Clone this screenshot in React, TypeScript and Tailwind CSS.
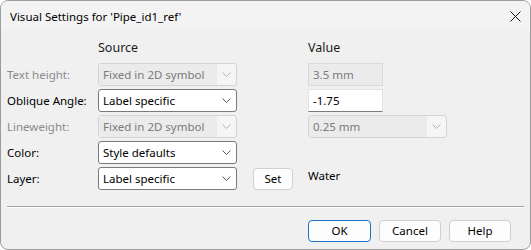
import React from 'react';

const font = { fontFamily: '"Noto Sans", "Liberation Sans", Arial, sans-serif' };

const Chevron = ({ disabled }: { disabled?: boolean }) => (
  <svg width="9" height="5" viewBox="0 0 9 5" className="shrink-0">
    <path d="M0.5 0.5 L4.5 4.5 L8.5 0.5" fill="none" stroke={disabled ? '#b4b4b4' : '#5c5c5c'} strokeWidth="1" />
  </svg>
);

const Combo = ({ value, disabled, width = 'w-[139px]' }: { value: string; disabled?: boolean; width?: string }) =>
  disabled ? (
    <div className={`${width} h-[23px] flex border border-[#d3d3d3] rounded-[3px] bg-[#f5f5f5]`}>
      <div className="flex-1 flex items-center pl-[4px] bg-[#ebebeb] text-[#7a7a7a] text-[11.5px]">{value}</div>
      <div className="w-[19px] flex items-center justify-center pr-[1px]">
        <Chevron disabled />
      </div>
    </div>
  ) : (
    <div className={`${width} h-[23px] flex items-center border border-[#7a7a7a] rounded-[3px] bg-white`}>
      <div className="flex-1 pl-[4px] text-black text-[11.5px]">{value}</div>
      <div className="w-[19px] flex items-center justify-center pr-[1px]">
        <Chevron />
      </div>
    </div>
  );

const Button = ({ label, width, primary }: { label: string; width: string; primary?: boolean }) => (
  <div
    className={`${width} h-[22px] flex items-center justify-center rounded-[4px] bg-[#fdfdfd] text-[11.5px] text-black border ${
      primary ? 'border-[#1a73c8]' : 'border-[#d0d0d0]'
    }`}
  >
    {label}
  </div>
);

const Label = ({ text, disabled }: { text: string; disabled?: boolean }) => (
  <div className={`w-[97px] pl-[6px] text-[11.5px] ${disabled ? 'text-[#8a8a8a]' : 'text-black'}`}>{text}</div>
);

export default function App() {
  return (
    <div style={font} className="w-[531px] h-[250px] bg-white">
      <div className="w-[531px] h-[250px] flex flex-col border border-[#9c9c9c] rounded-[8px] bg-[#f0f0f0] overflow-hidden">
        {/* title bar */}
        <div className="h-[29px] shrink-0 flex items-center justify-between pl-[9px] pr-[9px] bg-[#f3f3f3]">
          <span className="text-[11.5px] text-black pt-[2px]">Visual Settings for 'Pipe_id1_ref'</span>
          <svg width="11" height="11" viewBox="0 0 11 11" className="mt-[2px]">
            <path d="M0.5 0.5 L10.5 10.5 M10.5 0.5 L0.5 10.5" stroke="#1a1a1a" strokeWidth="1" />
          </svg>
        </div>

        {/* headers */}
        <div className="h-[33px] flex items-center pt-[4px]">
          <div className="w-[97px]" />
          <div className="w-[210px] text-[12.5px] text-[#1b1b1b]">Source</div>
          <div className="text-[12.5px] text-[#1b1b1b]">Value</div>
        </div>

        <div className="flex flex-col gap-[3px]">
          <div className="h-[23px] flex items-center">
            <Label text="Text height:" disabled />
            <Combo value="Fixed in 2D symbol" disabled />
            <div className="w-[71px]" />
            <div className="w-[75px] h-[23px] flex items-center pl-[4px] border border-[#dadada] bg-[#ebebeb] text-[11.5px] text-[#7a7a7a]">
              3.5 mm
            </div>
          </div>

          <div className="h-[23px] flex items-center">
            <Label text="Oblique Angle:" />
            <Combo value="Label specific" />
            <div className="w-[71px]" />
            <div className="w-[75px] h-[23px] flex items-center pl-[4px] border border-[#e3e3e3] border-b-[#7a7a7a] bg-white text-[11.5px] text-black">
              -1.75
            </div>
          </div>

          <div className="h-[23px] flex items-center">
            <Label text="Lineweight:" disabled />
            <Combo value="Fixed in 2D symbol" disabled />
            <div className="w-[71px]" />
            <Combo value="0.25 mm" disabled />
          </div>

          <div className="h-[23px] flex items-center">
            <Label text="Color:" />
            <Combo value="Style defaults" />
          </div>

          <div className="h-[23px] flex items-center">
            <Label text="Layer:" />
            <Combo value="Label specific" />
            <div className="w-[16px]" />
            <Button label="Set" width="w-[40px]" />
            <div className="w-[15px]" />
            <div className="pb-[6px] text-[11.5px] text-black">Water</div>
          </div>
        </div>

        <div className="mt-[16px] mx-[6px] border-t border-[#a0a0a0] border-b border-b-white" />

        <div className="mt-[12px] flex justify-end gap-[8px] pr-[19px]">
          <Button label="OK" width="w-[63px]" primary />
          <Button label="Cancel" width="w-[62px]" />
          <Button label="Help" width="w-[62px]" />
        </div>
      </div>
    </div>
  );
}
